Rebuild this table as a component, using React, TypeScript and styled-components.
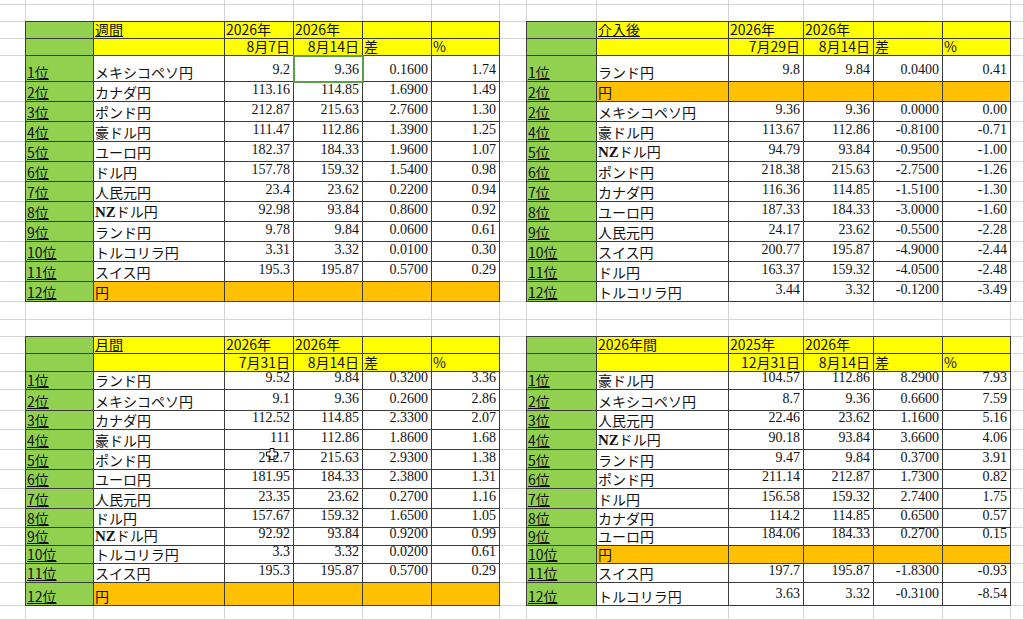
import React from 'react';
import styled, { createGlobalStyle, css } from 'styled-components';

const GRID = '#d4d4d4';
const DARK = '#3b3b3b';
const GREEN = '#92d050';
const YELLOW = '#ffff00';
const ORANGE = '#ffc000';
const SELECT = '#5c9e48';

// column / row sizes of the sheet, measured so each border lands on its gridline
const COL_WIDTHS = [26, 68, 131, 69, 69, 69, 68, 27, 70, 132, 75, 70, 69, 68];
const ROW_HEIGHTS = [
  5, 17, 17, 17, 26, 20, 20, 20, 20, 20, 20, 20, 20, 20, 20, 20,
  18, 17, 17, 18, 18, 21, 19, 20, 20, 19, 20, 19, 18, 18, 19, 23,
];

type Values = [string, string, string, string];

type Row = {
  rank: string;
  name: string;
  values?: Values;
};

type Ranking = {
  title: string;
  underline: boolean;
  years: [string, string];
  dates: [string, string];
  rows: Row[];
};

const WEEKLY: Ranking = {
  title: '週間',
  underline: true,
  years: ['2026年', '2026年'],
  dates: ['8月7日', '8月14日'],
  rows: [
    { rank: '1位', name: 'メキシコペソ円', values: ['9.2', '9.36', '0.1600', '1.74'] },
    { rank: '2位', name: 'カナダ円', values: ['113.16', '114.85', '1.6900', '1.49'] },
    { rank: '3位', name: 'ポンド円', values: ['212.87', '215.63', '2.7600', '1.30'] },
    { rank: '4位', name: '豪ドル円', values: ['111.47', '112.86', '1.3900', '1.25'] },
    { rank: '5位', name: 'ユーロ円', values: ['182.37', '184.33', '1.9600', '1.07'] },
    { rank: '6位', name: 'ドル円', values: ['157.78', '159.32', '1.5400', '0.98'] },
    { rank: '7位', name: '人民元円', values: ['23.4', '23.62', '0.2200', '0.94'] },
    { rank: '8位', name: 'NZドル円', values: ['92.98', '93.84', '0.8600', '0.92'] },
    { rank: '9位', name: 'ランド円', values: ['9.78', '9.84', '0.0600', '0.61'] },
    { rank: '10位', name: 'トルコリラ円', values: ['3.31', '3.32', '0.0100', '0.30'] },
    { rank: '11位', name: 'スイス円', values: ['195.3', '195.87', '0.5700', '0.29'] },
    { rank: '12位', name: '円' },
  ],
};

const AFTER_INTERVENTION: Ranking = {
  title: '介入後',
  underline: true,
  years: ['2026年', '2026年'],
  dates: ['7月29日', '8月14日'],
  rows: [
    { rank: '1位', name: 'ランド円', values: ['9.8', '9.84', '0.0400', '0.41'] },
    { rank: '2位', name: '円' },
    { rank: '2位', name: 'メキシコペソ円', values: ['9.36', '9.36', '0.0000', '0.00'] },
    { rank: '4位', name: '豪ドル円', values: ['113.67', '112.86', '-0.8100', '-0.71'] },
    { rank: '5位', name: 'NZドル円', values: ['94.79', '93.84', '-0.9500', '-1.00'] },
    { rank: '6位', name: 'ポンド円', values: ['218.38', '215.63', '-2.7500', '-1.26'] },
    { rank: '7位', name: 'カナダ円', values: ['116.36', '114.85', '-1.5100', '-1.30'] },
    { rank: '8位', name: 'ユーロ円', values: ['187.33', '184.33', '-3.0000', '-1.60'] },
    { rank: '9位', name: '人民元円', values: ['24.17', '23.62', '-0.5500', '-2.28'] },
    { rank: '10位', name: 'スイス円', values: ['200.77', '195.87', '-4.9000', '-2.44'] },
    { rank: '11位', name: 'ドル円', values: ['163.37', '159.32', '-4.0500', '-2.48'] },
    { rank: '12位', name: 'トルコリラ円', values: ['3.44', '3.32', '-0.1200', '-3.49'] },
  ],
};

const MONTHLY: Ranking = {
  title: '月間',
  underline: true,
  years: ['2026年', '2026年'],
  dates: ['7月31日', '8月14日'],
  rows: [
    { rank: '1位', name: 'ランド円', values: ['9.52', '9.84', '0.3200', '3.36'] },
    { rank: '2位', name: 'メキシコペソ円', values: ['9.1', '9.36', '0.2600', '2.86'] },
    { rank: '3位', name: 'カナダ円', values: ['112.52', '114.85', '2.3300', '2.07'] },
    { rank: '4位', name: '豪ドル円', values: ['111', '112.86', '1.8600', '1.68'] },
    { rank: '5位', name: 'ポンド円', values: ['212.7', '215.63', '2.9300', '1.38'] },
    { rank: '6位', name: 'ユーロ円', values: ['181.95', '184.33', '2.3800', '1.31'] },
    { rank: '7位', name: '人民元円', values: ['23.35', '23.62', '0.2700', '1.16'] },
    { rank: '8位', name: 'ドル円', values: ['157.67', '159.32', '1.6500', '1.05'] },
    { rank: '9位', name: 'NZドル円', values: ['92.92', '93.84', '0.9200', '0.99'] },
    { rank: '10位', name: 'トルコリラ円', values: ['3.3', '3.32', '0.0200', '0.61'] },
    { rank: '11位', name: 'スイス円', values: ['195.3', '195.87', '0.5700', '0.29'] },
    { rank: '12位', name: '円' },
  ],
};

const YEARLY: Ranking = {
  title: '2026年間',
  underline: false,
  years: ['2025年', '2026年'],
  dates: ['12月31日', '8月14日'],
  rows: [
    { rank: '1位', name: '豪ドル円', values: ['104.57', '112.86', '8.2900', '7.93'] },
    { rank: '2位', name: 'メキシコペソ円', values: ['8.7', '9.36', '0.6600', '7.59'] },
    { rank: '3位', name: '人民元円', values: ['22.46', '23.62', '1.1600', '5.16'] },
    { rank: '4位', name: 'NZドル円', values: ['90.18', '93.84', '3.6600', '4.06'] },
    { rank: '5位', name: 'ランド円', values: ['9.47', '9.84', '0.3700', '3.91'] },
    { rank: '6位', name: 'ポンド円', values: ['211.14', '212.87', '1.7300', '0.82'] },
    { rank: '7位', name: 'ドル円', values: ['156.58', '159.32', '2.7400', '1.75'] },
    { rank: '8位', name: 'カナダ円', values: ['114.2', '114.85', '0.6500', '0.57'] },
    { rank: '9位', name: 'ユーロ円', values: ['184.06', '184.33', '0.2700', '0.15'] },
    { rank: '10位', name: '円' },
    { rank: '11位', name: 'スイス円', values: ['197.7', '195.87', '-1.8300', '-0.93'] },
    { rank: '12位', name: 'トルコリラ円', values: ['3.63', '3.32', '-0.3100', '-8.54'] },
  ],
};

const GlobalStyle = createGlobalStyle`
  html, body {
    margin: 0;
    padding: 0;
    background: #fff;
  }
  body {
    font-family: "Noto Sans CJK JP", "Liberation Sans", sans-serif;
    color: #111;
  }
`;

const Sheet = styled.div`
  position: relative;
  width: 1024px;
  height: 620px;
  overflow: hidden;
  display: grid;
  grid-template-columns: ${COL_WIDTHS.map((w) => `${w}px`).join(' ')} 1fr;
  grid-template-rows: ${ROW_HEIGHTS.map((h) => `${h}px`).join(' ')} 1fr;
  background: #fff;
`;

const edgeShadow = (top: boolean, left: boolean) => {
  const parts: string[] = [];
  if (top) parts.push(`0 -1px 0 ${DARK}`);
  if (left) parts.push(`-1px 0 0 ${DARK}`);
  if (top && left) parts.push(`-1px -1px 0 ${DARK}`);
  return parts.length ? parts.join(', ') : 'none';
};

const Cell = styled.div<{
  $fill?: string;
  $ruled: boolean;
  $top: boolean;
  $left: boolean;
  $right: boolean;
  $selected: boolean;
}>`
  box-sizing: border-box;
  min-width: 0;
  display: flex;
  align-items: flex-end;
  justify-content: ${({ $right }) => ($right ? 'flex-end' : 'flex-start')};
  padding: 0 ${({ $right }) => ($right ? '3px' : '0')} 2px 1px;
  white-space: nowrap;
  background: ${({ $fill }) => $fill ?? '#fff'};
  border-right: 1px solid ${({ $ruled }) => ($ruled ? DARK : GRID)};
  border-bottom: 1px solid ${({ $ruled }) => ($ruled ? DARK : GRID)};
  box-shadow: ${({ $top, $left }) => edgeShadow($top, $left)};
  font-size: 14px;
  line-height: 14px;
  ${({ $selected }) =>
    $selected &&
    css`
      position: relative;
      z-index: 1;
      outline: 2px solid ${SELECT};
      outline-offset: -1px;
    `}
`;

const Label = styled.span<{ $underline?: boolean }>`
  text-decoration: ${({ $underline }) => ($underline ? 'underline' : 'none')};
  text-decoration-thickness: 1px;
  text-underline-offset: 1px;
`;

const Num = styled.span`
  font-family: "Liberation Serif", "Times New Roman", serif;
  font-size: 14px;
  line-height: 14px;
  padding-bottom: 2px;
`;

const Latin = styled.span`
  font-family: "Liberation Serif", "Times New Roman", serif;
  font-weight: bold;
  font-size: 15px;
`;

const Cursor = styled.svg`
  position: absolute;
  left: 266px;
  top: 448px;
  width: 12px;
  height: 12px;
  z-index: 2;
  pointer-events: none;
`;

type Spec = {
  ruled: boolean;
  fill?: string;
  top?: boolean;
  left?: boolean;
  right?: boolean;
  selected?: boolean;
  content?: React.ReactNode;
};

const CurrencyName: React.FC<{ name: string }> = ({ name }) =>
  name.startsWith('NZ') ? (
    <Label>
      <Latin>NZ</Latin>
      {name.slice(2)}
    </Label>
  ) : (
    <Label>{name}</Label>
  );

function buildSheet(): Spec[][] {
  const sheet: Spec[][] = Array.from({ length: ROW_HEIGHTS.length + 1 }, () =>
    Array.from({ length: COL_WIDTHS.length + 1 }, () => ({ ruled: false })),
  );

  const place = (table: Ranking, r0: number, c0: number) => {
    const put = (r: number, c: number, spec: Omit<Spec, 'ruled'>) => {
      sheet[r0 + r][c0 + c] = { ruled: true, top: r === 0, left: c === 0, ...spec };
    };

    put(0, 0, { fill: GREEN });
    put(0, 1, { fill: YELLOW, content: <Label $underline={table.underline}>{table.title}</Label> });
    put(0, 2, { fill: YELLOW, content: <Label>{table.years[0]}</Label> });
    put(0, 3, { fill: YELLOW, content: <Label>{table.years[1]}</Label> });
    put(0, 4, { fill: YELLOW });
    put(0, 5, { fill: YELLOW });

    put(1, 0, { fill: GREEN });
    put(1, 1, { fill: YELLOW });
    put(1, 2, { fill: YELLOW, right: true, content: <Label>{table.dates[0]}</Label> });
    put(1, 3, { fill: YELLOW, right: true, content: <Label>{table.dates[1]}</Label> });
    put(1, 4, { fill: YELLOW, content: <Label>差</Label> });
    put(1, 5, { fill: YELLOW, content: <Label>%</Label> });

    table.rows.forEach((row, i) => {
      const r = i + 2;
      put(r, 0, { fill: GREEN, content: <Label $underline>{row.rank}</Label> });
      if (!row.values) {
        put(r, 1, { fill: ORANGE, content: <Label>{row.name}</Label> });
        for (let c = 2; c < 6; c++) put(r, c, { fill: ORANGE });
        return;
      }
      put(r, 1, { content: <CurrencyName name={row.name} /> });
      row.values.forEach((v, j) => put(r, 2 + j, { right: true, content: <Num>{v}</Num> }));
    });
  };

  place(WEEKLY, 2, 1);
  place(AFTER_INTERVENTION, 2, 8);
  place(MONTHLY, 18, 1);
  place(YEARLY, 18, 8);

  // active cell
  sheet[4][4].selected = true;
  return sheet;
}

const SHEET = buildSheet();

export default function App() {
  return (
    <>
      <GlobalStyle />
      <Sheet>
        {SHEET.map((row, r) =>
          row.map((spec, c) => (
            <Cell
              key={`${r}-${c}`}
              $fill={spec.fill}
              $ruled={spec.ruled}
              $top={!!spec.top}
              $left={!!spec.left}
              $right={!!spec.right}
              $selected={!!spec.selected}
            >
              {spec.content}
            </Cell>
          )),
        )}
        <Cursor viewBox="0 0 12 12">
          <path
            d="M4 0.5H8V4H11.5V8H8V11.5H4V8H0.5V4H4Z"
            fill="#fff"
            stroke="#000"
            strokeWidth="1"
          />
        </Cursor>
      </Sheet>
    </>
  );
}
